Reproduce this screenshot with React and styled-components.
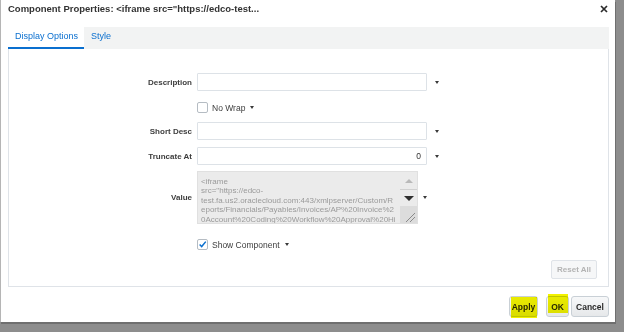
import React from 'react'
import styled, { createGlobalStyle } from 'styled-components'

const GlobalStyle = createGlobalStyle`
  html, body {
    margin: 0;
    padding: 0;
    background: #8d8d8d;
    width: 624px;
    height: 332px;
    overflow: hidden;
  }
  * { box-sizing: border-box; }
`

const valueLines = [
  '<iframe',
  'src="https://edco-',
  'test.fa.us2.oraclecloud.com:443/xmlpserver/Custom/R',
  'eports/Financials/Payables/Invoices/AP%20Invoice%2',
  '0Account%20Coding%20Workflow%20Approval%20Hi',
]

const App = () => {
  return (
    <>
      <GlobalStyle />
      <Dialog>
        <TitleBar>
          <Title>Component Properties: &lt;iframe src="https://edco-test...</Title>
          <Close>
            <svg width="8" height="8" viewBox="0 0 8 8">
              <path d="M1 1 L7 7 M7 1 L1 7" stroke="#2b2b2b" strokeWidth="1.7" />
            </svg>
          </Close>
        </TitleBar>

        <Tabs>
          <Tab $active>Display Options</Tab>
          <Tab>Style</Tab>
        </Tabs>

        <Panel>
          <Row $mt={24} $h={18}>
            <Label>Description</Label>
            <Input />
            <Arrow $ml={8} />
          </Row>

          <Row $mt={8} $h={17}>
            <Label />
            <Check />
            <CheckText>No Wrap</CheckText>
            <Arrow $ml={5} />
          </Row>

          <Row $mt={6} $h={18}>
            <Label>Short Desc</Label>
            <Input />
            <Arrow $ml={8} />
          </Row>

          <Row $mt={7} $h={18}>
            <Label>Truncate At</Label>
            <Input>0</Input>
            <Arrow $ml={8} />
          </Row>

          <Row $mt={6} $h={53}>
            <Label>Value</Label>
            <TextArea>
              <TextBody>
                {valueLines.map((l) => (
                  <div key={l}>{l}</div>
                ))}
              </TextBody>
              <ScrollBar>
                <ScrollBtn>
                  <Tri $c="#b9b9b9" $w={4} $h={4} $up />
                </ScrollBtn>
                <ScrollBtn $line>
                  <Tri $c="#2f2f2f" $w={5} $h={5} />
                </ScrollBtn>
                <Grip>
                  <svg width="17" height="14" viewBox="0 0 17 14">
                    <path d="M15 4 L6 13 M15 8 L10 13" stroke="#8a8a8a" strokeWidth="1" />
                  </svg>
                </Grip>
              </ScrollBar>
            </TextArea>
            <Arrow $ml={5} />
          </Row>

          <Row $mt={12} $h={17}>
            <Label />
            <Check $checked>
              <svg width="11" height="11" viewBox="0 0 11 11">
                <path d="M2 5.5 L4.5 8 L9.5 2" stroke="#0a6fcf" strokeWidth="1.8" fill="none" />
              </svg>
            </Check>
            <CheckText>Show Component</CheckText>
            <Arrow $ml={5} />
          </Row>

          <ResetRow>
            <ResetButton disabled>Reset All</ResetButton>
          </ResetRow>
        </Panel>

        <Footer>
          <Button $marked $w={29}>Apply</Button>
          <Button $marked $w={23} $ml={8} $hlTop={-3}>OK</Button>
          <Button $w={38} $ml={2}>Cancel</Button>
        </Footer>
      </Dialog>
    </>
  )
}

export default App

const Dialog = styled.div`
  width: 615px;
  height: 322px;
  background: #ffffff;
  border-left: 1px solid #b5b5b5;
  box-shadow: 1px 2px 0 #6f6f6f;
  display: flex;
  flex-direction: column;
  font-family: "Liberation Sans", Arial, sans-serif;
  color: #333333;
`

const TitleBar = styled.div`
  height: 27px;
  display: flex;
  align-items: flex-start;
  justify-content: space-between;
  padding: 3px 7px 0 7px;
`

const Title = styled.div`
  font-size: 9.5px;
  font-weight: bold;
  line-height: 12px;
  color: #333333;
  white-space: nowrap;
`

const Close = styled.div`
  width: 8px;
  height: 8px;
  margin-top: 2px;
  display: flex;
`

const Tabs = styled.div`
  height: 22px;
  margin: 0 6px 0 7px;
  background: #f2f3f3;
  display: flex;
`

const Tab = styled.div`
  height: 22px;
  padding: 0 ${(p) => (p.$active ? '6px' : '5px')} 0 7px;
  font-size: 9px;
  line-height: 19px;
  color: #0a6fcf;
  background: ${(p) => (p.$active ? '#ffffff' : 'transparent')};
  border-bottom: ${(p) => (p.$active ? '2px solid #0a6fcf' : 'none')};
  white-space: nowrap;
`

const Panel = styled.div`
  height: 238px;
  margin: 0 6px 0 7px;
  border: 1px solid #dfe3e8;
  border-top: none;
  display: flex;
  flex-direction: column;
`

const Row = styled.div`
  display: flex;
  align-items: center;
  margin-top: ${(p) => p.$mt}px;
  height: ${(p) => p.$h}px;
`

const Label = styled.div`
  width: 188px;
  flex-shrink: 0;
  padding-right: 5px;
  text-align: right;
  font-size: 8px;
  font-weight: bold;
  color: #3d3d3d;
  white-space: nowrap;
`

const Input = styled.div`
  width: 230px;
  height: 18px;
  border: 1px solid #dde2e7;
  border-radius: 1px;
  background: #ffffff;
  font-size: 8.5px;
  line-height: 16px;
  text-align: right;
  padding-right: 5px;
  color: #333333;
`

const Arrow = styled.span`
  width: 0;
  height: 0;
  margin-left: ${(p) => p.$ml}px;
  border-left: 2.5px solid transparent;
  border-right: 2.5px solid transparent;
  border-top: 3px solid #3a3a3a;
`

const Check = styled.div`
  width: 11px;
  height: 11px;
  border: 1px solid #b5bcc3;
  border-radius: 2px;
  background: #ffffff;
  display: flex;
  align-items: center;
  justify-content: center;
  overflow: hidden;
`

const CheckText = styled.span`
  margin-left: 4px;
  font-size: 8.5px;
  color: #3d3d3d;
  white-space: nowrap;
`

const TextArea = styled.div`
  width: 221px;
  height: 53px;
  background: #ebebeb;
  border: 1px solid #e0e0e0;
  display: flex;
  overflow: hidden;
`

const TextBody = styled.div`
  flex: 1;
  padding: 5px 0 0 3px;
  font-size: 8px;
  line-height: 9.4px;
  color: #9a9a9a;
  white-space: nowrap;
  overflow: hidden;
`

const ScrollBar = styled.div`
  width: 17px;
  display: flex;
  flex-direction: column;
`

const ScrollBtn = styled.div`
  height: 17px;
  display: flex;
  align-items: center;
  justify-content: center;
  border-top: ${(p) => (p.$line ? '1px solid #d0d0d0' : 'none')};
`

const Tri = styled.span`
  width: 0;
  height: 0;
  border-left: ${(p) => p.$w}px solid transparent;
  border-right: ${(p) => p.$w}px solid transparent;
  ${(p) =>
    p.$up
      ? `border-bottom: ${p.$h}px solid ${p.$c};`
      : `border-top: ${p.$h}px solid ${p.$c};`}
`

const Grip = styled.div`
  flex: 1;
  background: #dcdcdc;
  display: flex;
  align-items: flex-end;
`

const ResetRow = styled.div`
  margin-top: 7px;
  display: flex;
  justify-content: flex-end;
  padding-right: 11px;
`

const ResetButton = styled.button`
  width: 46px;
  height: 19px;
  padding: 0;
  border: 1px solid #dfe3e8;
  border-radius: 2px;
  background: #f6f7f8;
  font-family: "Liberation Sans", Arial, sans-serif;
  font-size: 8px;
  font-weight: bold;
  color: #b3b3b3;
`

const Footer = styled.div`
  flex: 1;
  display: flex;
  justify-content: flex-end;
  align-items: flex-start;
  padding: 9px 6px 0 0;
`

const Button = styled.button`
  position: relative;
  width: ${(p) => p.$w}px;
  height: 21px;
  margin-left: ${(p) => p.$ml || 0}px;
  padding: 0;
  border: 1px solid #c9d0d6;
  border-radius: 3px;
  background: linear-gradient(#f7f8f9, #e6e8ea);
  font-family: "Liberation Sans", Arial, sans-serif;
  font-size: 8.5px;
  font-weight: bold;
  color: #2b2b2b;

  &::before {
    content: '';
    display: ${(p) => (p.$marked ? 'block' : 'none')};
    position: absolute;
    left: 1px;
    right: 0;
    top: ${(p) => p.$hlTop || 0}px;
    bottom: ${(p) => (p.$hlTop ? 3 : -2)}px;
    background: #f2f200;
    mix-blend-mode: multiply;
  }
`
